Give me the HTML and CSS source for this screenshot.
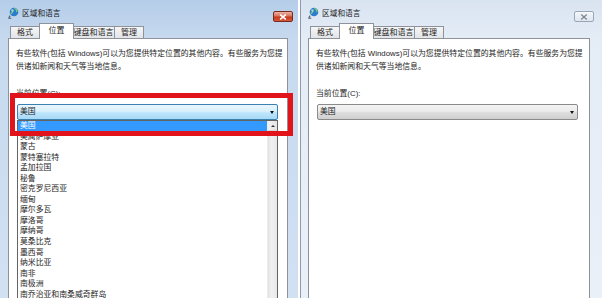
FILE: index.html
```html
<!DOCTYPE html>
<html lang="zh-CN">
<head>
<meta charset="utf-8">
<title>区域和语言</title>
<link rel="stylesheet" href="styles.css">
</head>
<body>
<div class="screen">
  <div class="window win-active">
    <div class="titlebar">
      <svg class="appicon" width="11" height="12" viewBox="0 0 11 12"><circle cx="6" cy="5" r="4.3" fill="#2a7ccf"/><path d="M3.2 3.2c1.2.2 1.8 1 1.3 1.9-.4.8-1.4.9-1.4 1.9M6.5 1.2c.4.8 1.5.8 2.1 1.6.5.7-.2 1.5.5 2.2" stroke="#86d46b" stroke-width="1.2" fill="none"/><circle cx="4.6" cy="3.4" r="1.2" fill="#d6ecff" opacity=".6"/><path d="M2.2 8.6l-1.4 2.2M.3 11.2h3" stroke="#4b5d70" stroke-width="1.1"/></svg>
      <span class="title">区域和语言</span>
      <span class="close close-active"><svg width="8" height="6" viewBox="0 0 8 6"><path d="M1.2.6l5.6 4.8M6.8.6L1.2 5.4" stroke="#fff" stroke-width="1.6"/></svg></span>
    </div>
    <div class="tabs">
      <span class="tab tab-fmt">格式</span><span class="tab tab-loc tab-sel">位置</span><span class="tab tab-kbd">键盘和语言</span><span class="tab tab-adm">管理</span>
    </div>
    <div class="panel">
      <p class="desc">有些软件(包括 Windows)可以为您提供特定位置的其他内容。有些服务为您提<br>供诸如新闻和天气等当地信息。</p>
      <div class="label">当前位置(C):</div>
      <div class="combo-wrap">
        <div class="combo combo-hot"><span>美国</span><span class="drop-arrow"></span></div>
        <div class="droplist">
          <ul class="items">
            <li class="item item-sel">美国</li>
            <li class="item">美属萨摩亚</li>
            <li class="item">蒙古</li>
            <li class="item">蒙特塞拉特</li>
            <li class="item">孟加拉国</li>
            <li class="item">秘鲁</li>
            <li class="item">密克罗尼西亚</li>
            <li class="item">缅甸</li>
            <li class="item">摩尔多瓦</li>
            <li class="item">摩洛哥</li>
            <li class="item">摩纳哥</li>
            <li class="item">莫桑比克</li>
            <li class="item">墨西哥</li>
            <li class="item">纳米比亚</li>
            <li class="item">南非</li>
            <li class="item">南极洲</li>
            <li class="item">南乔治亚和南桑威奇群岛</li>
          </ul>
          <div class="scrollbar"><span class="scroll-up"></span></div>
        </div>
      </div>
    </div>
    <div class="redbox"></div>
  </div>

  <div class="window win-inactive">
    <div class="titlebar">
      <svg class="appicon" width="11" height="12" viewBox="0 0 11 12"><circle cx="6" cy="5" r="4.3" fill="#2a7ccf"/><path d="M3.2 3.2c1.2.2 1.8 1 1.3 1.9-.4.8-1.4.9-1.4 1.9M6.5 1.2c.4.8 1.5.8 2.1 1.6.5.7-.2 1.5.5 2.2" stroke="#86d46b" stroke-width="1.2" fill="none"/><circle cx="4.6" cy="3.4" r="1.2" fill="#d6ecff" opacity=".6"/><path d="M2.2 8.6l-1.4 2.2M.3 11.2h3" stroke="#4b5d70" stroke-width="1.1"/></svg>
      <span class="title">区域和语言</span>
      <span class="close close-inactive"><svg width="8" height="6" viewBox="0 0 8 6"><path d="M1.2.6l5.6 4.8M6.8.6L1.2 5.4" stroke="#7d8794" stroke-width="1.3"/></svg></span>
    </div>
    <div class="tabs">
      <span class="tab tab-fmt">格式</span><span class="tab tab-loc tab-sel">位置</span><span class="tab tab-kbd">键盘和语言</span><span class="tab tab-adm">管理</span>
    </div>
    <div class="panel">
      <p class="desc">有些软件(包括 Windows)可以为您提供特定位置的其他内容。有些服务为您提<br>供诸如新闻和天气等当地信息。</p>
      <div class="label">当前位置(C):</div>
      <div class="combo-wrap">
        <div class="combo combo-normal"><span>美国</span><span class="drop-arrow"></span></div>
      </div>
    </div>
  </div>
</div>
</body>
</html>
```

FILE: styles.css
```css
* { box-sizing: border-box; margin: 0; padding: 0; }
html, body { width: 602px; height: 298px; overflow: hidden; background: #fff; }
body {
  font-family: "Liberation Sans", "Noto Sans CJK SC", sans-serif;
  font-size: 7.85px;
  color: #1e1e1e;
}
.screen { display: flex; gap: 2px; height: 298px; overflow: hidden; }

.window {
  position: relative;
  height: 298px;
  display: flex;
  flex-direction: column;
  overflow: hidden;
}
.win-active {
  width: 298px;
  padding: 0 10px 0 8px;
  background: linear-gradient(#b5cde9 0, #c6d9ee 38px, #d2e1f2 100%);
}
.win-inactive {
  width: 302px;
  padding: 0 12px 0 7px;
  border-left: 1px solid #8d9aab;
  background: linear-gradient(#d9e4f1 0, #e4ecf6 38px, #eaf0f8 100%);
}

.titlebar {
  height: 22px;
  display: flex;
  align-items: center;
  padding-top: 3px;
  flex: none;
}
.appicon { flex: none; margin-right: 3px; }
.title { font-size: 7.7px; color: #1a1a1a; }
.close {
  margin-left: auto;
  align-self: flex-start;
  margin-top: 8px;
  width: 20px;
  height: 11px;
  border-radius: 2px;
  display: flex;
  align-items: center;
  justify-content: center;
}
.close-active {
  margin-right: -5px;
  border: 1px solid #7b2a1c;
  background: linear-gradient(#eab3a4 0, #d9745c 45%, #c4391b 55%, #d25a3c 100%);
}
.close-inactive {
  margin-right: -4px;
  border: 1px solid #9aa6b4;
  background: linear-gradient(#f4f7fb, #dfe6ee);
}

.tabs {
  height: 16px;
  display: flex;
  align-items: flex-end;
  padding-left: 2px;
  flex: none;
}
.tab {
  height: 12px;
  border: 1px solid #8e929b;
  border-bottom: none;
  background: linear-gradient(#f6f6f6, #e2e4e8);
  text-align: center;
  line-height: 11px;
  font-size: 8px;
  white-space: nowrap;
}
.tab-fmt { width: 30px; }
.tab-loc { width: 35px; }
.tab-kbd { width: 43px; margin-left: -1px; }
.tab-adm { width: 30px; margin-left: -1px; }
.tab-sel {
  height: 16px;
  margin: 0 -1px -1px -1px;
  background: #fff;
  position: relative;
  z-index: 1;
  line-height: 14px;
}

.panel {
  flex: 1;
  min-height: 0;
  background: #fff;
  border: 1px solid #8e929b;
  border-bottom: none;
  padding: 8px 7px 0;
}
.desc { line-height: 13px; white-space: nowrap; }
.label { margin-top: 14px; line-height: 13px; }

.combo-wrap { position: relative; margin: 4px 0 0 1px; width: 261px; }
.combo {
  height: 16px;
  border-radius: 2px;
  line-height: 14px;
  padding-left: 2px;
  position: relative;
}
.combo-hot {
  border: 1px solid #3c7fb1;
  background: linear-gradient(#eaf6fd 0, #d9f0fc 45%, #bee6fd 55%, #a7d9f5 100%);
}
.combo-normal {
  border: 1px solid #8a8a8a;
  background: linear-gradient(#f4f4f4 0, #ebebeb 45%, #dddddd 55%, #cfcfcf 100%);
}
.drop-arrow {
  position: absolute;
  right: 3px;
  top: 6px;
  width: 0;
  height: 0;
  border-left: 2.5px solid transparent;
  border-right: 2.5px solid transparent;
  border-top: 3px solid #111;
}

.droplist {
  position: absolute;
  top: 16px;
  left: 0;
  width: 261px;
  height: 178px;
  overflow: hidden;
  background: #fff;
  border: 1px solid #646464;
  border-bottom: none;
  display: flex;
  z-index: 2;
}
.items { list-style: none; flex: 1; }
.item {
  height: 10.55px;
  line-height: 10.55px;
  padding-left: 2px;
  white-space: nowrap;
}
.item-sel { background: #3399ff; color: #fff; }
.scrollbar {
  width: 10px;
  flex: none;
  background: linear-gradient(90deg, #e3e3e3, #f1f1f1 40%, #e8e8e8);
  border-left: 1px solid #ececec;
  position: relative;
}
.scroll-up {
  position: absolute;
  left: 0;
  right: 0;
  top: 0;
  height: 10px;
  background: linear-gradient(90deg, #f3f3f3, #e4e4e4);
  border-bottom: 1px solid #d4d4d4;
}
.scroll-up::after {
  content: "";
  position: absolute;
  left: 2.5px;
  top: 4px;
  border-left: 2px solid transparent;
  border-right: 2px solid transparent;
  border-bottom: 2.5px solid #333;
}

.redbox {
  position: absolute;
  left: 10px;
  top: 93px;
  width: 283px;
  height: 43px;
  border: 5px solid #e1141c;
  z-index: 5;
}
```
